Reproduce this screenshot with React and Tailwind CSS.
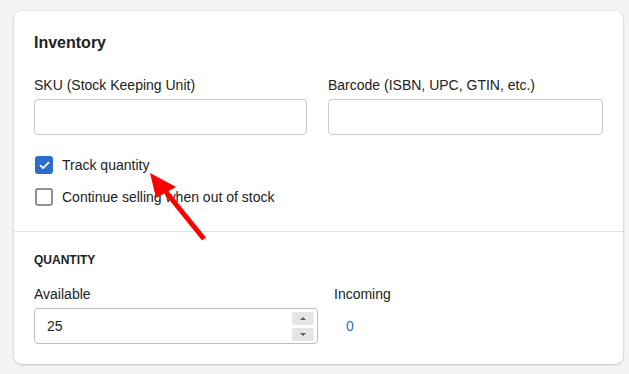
import { useState } from "react";

function Checkbox({ checked, label, onChange }) {
  return (
    <label className="flex h-5 cursor-pointer items-center gap-[9px]">
      <span
        className={
          checked
            ? "flex h-[18px] w-[18px] items-center justify-center rounded-[3px] bg-[#2c6ecb]"
            : "flex h-[18px] w-[18px] items-center justify-center rounded-[3px] border-2 border-[#8c9196] bg-white"
        }
        onClick={onChange}
      >
        {checked && (
          <svg width="11" height="9" viewBox="0 0 11 9" fill="none">
            <path d="M1.5 4.6 4.1 7.1 9.5 1.6" stroke="white" strokeWidth="1.8" strokeLinecap="round" strokeLinejoin="round" />
          </svg>
        )}
      </span>
      <span className="text-[14px] text-[#202223]">{label}</span>
    </label>
  );
}

export default function App() {
  const [track, setTrack] = useState(true);
  const [sell, setSell] = useState(false);
  const [available, setAvailable] = useState(25);

  return (
    <div
      className="relative h-[374px] w-[629px] overflow-hidden bg-[#f4f4f4] pt-[11px] pl-[14px]"
      style={{ fontFamily: '"Liberation Sans", Arial, sans-serif' }}
    >
      <div className="w-[609px] rounded-lg bg-white shadow-[0_0_0_1px_rgba(63,63,68,0.05),0_1px_3px_0_rgba(63,63,68,0.2)]">
        <div className="px-5 pt-5 pb-6">
          <h2 className="text-[16px] leading-6 font-bold text-[#202223]">Inventory</h2>

          <div className="mt-5 flex gap-[21px]">
            <div className="w-[273px]">
              <p className="mb-1 text-[14px] leading-5 text-[#202223]">SKU (Stock Keeping Unit)</p>
              <input className="h-9 w-full rounded-[4px] border border-[#c9cccf] px-3 text-[14px] outline-none" />
            </div>
            <div className="w-[275px]">
              <p className="mb-1 text-[14px] leading-5 text-[#202223]">Barcode (ISBN, UPC, GTIN, etc.)</p>
              <input className="h-9 w-full rounded-[4px] border border-[#c9cccf] px-3 text-[14px] outline-none" />
            </div>
          </div>

          <div className="mt-5 flex flex-col gap-3 pl-px">
            <Checkbox checked={track} label="Track quantity" onChange={() => setTrack(!track)} />
            <Checkbox checked={sell} label="Continue selling when out of stock" onChange={() => setSell(!sell)} />
          </div>
        </div>

        <div className="border-t border-[#e1e3e5] px-5 pt-5 pb-5">
          <h3 className="text-[12px] leading-4 font-bold text-[#202223] uppercase">Quantity</h3>

          <div className="mt-4 flex">
            <div className="w-[284px]">
              <p className="mb-1 text-[14px] leading-5 text-[#202223]">Available</p>
              <div className="flex h-9 items-center rounded-[4px] border border-[#babfc3] pr-[3px] pl-3">
                <input
                  className="min-w-0 flex-1 text-[14px] text-[#202223] outline-none"
                  value={available}
                  onChange={(event) => setAvailable(event.target.value)}
                />
                <div className="flex flex-col gap-[3px]">
                  <button
                    className="flex h-[13px] w-[22px] items-center justify-center rounded-[3px] bg-[#e4e5e7]"
                    onClick={() => setAvailable(Number(available) + 1)}
                  >
                    <span className="h-0 w-0 border-x-[3px] border-b-[3px] border-x-transparent border-b-[#5c5f62]" />
                  </button>
                  <button
                    className="flex h-[13px] w-[22px] items-center justify-center rounded-[3px] bg-[#e4e5e7]"
                    onClick={() => setAvailable(Number(available) - 1)}
                  >
                    <span className="h-0 w-0 border-x-[3px] border-t-[3px] border-x-transparent border-t-[#5c5f62]" />
                  </button>
                </div>
              </div>
            </div>
            <div className="ml-4">
              <p className="mb-1 text-[14px] leading-5 text-[#202223]">Incoming</p>
              <div className="flex h-9 items-center pl-3 text-[14px] text-[#2c6ecb]">0</div>
            </div>
          </div>
        </div>
      </div>

      <svg className="pointer-events-none absolute inset-0" width="629" height="374" viewBox="0 0 629 374">
        <line x1="204" y1="239" x2="166" y2="192" stroke="#ff0000" strokeWidth="5" />
        <polygon points="150,173 156,198 176,187" fill="#ff0000" />
      </svg>
    </div>
  );
}
